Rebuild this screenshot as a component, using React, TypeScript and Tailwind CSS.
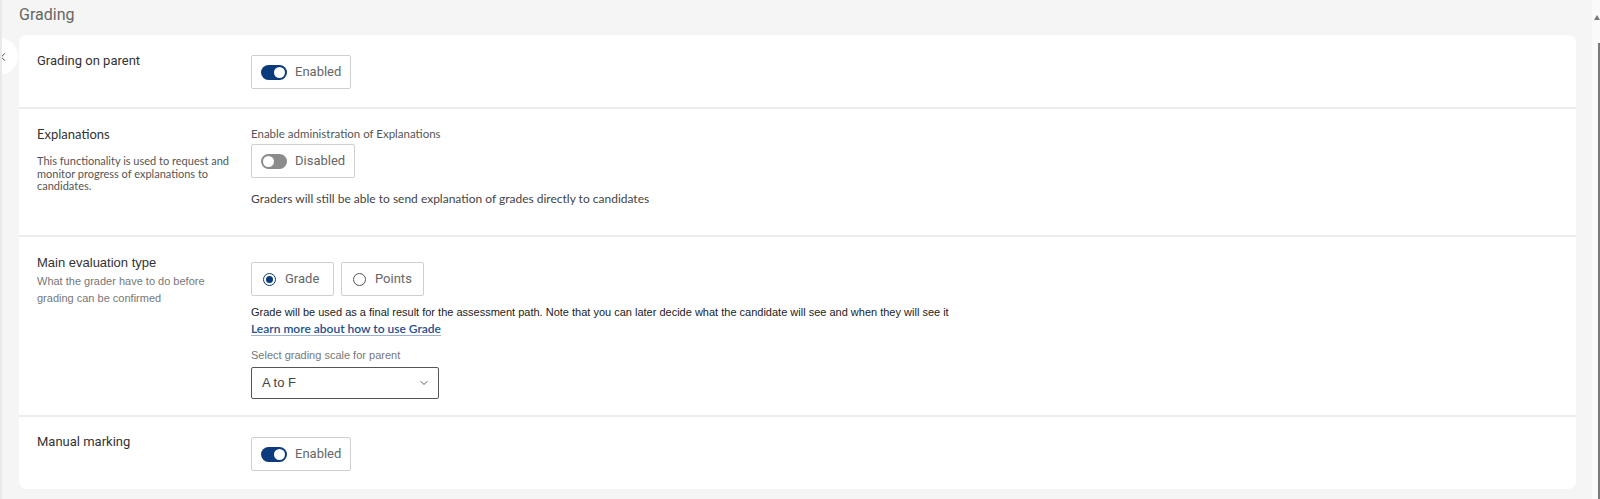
import { ChevronDown, ChevronLeft } from "lucide-react";

const roboto = "font-['Roboto',sans-serif]";
const lato = "font-['Lato',sans-serif]";
const arial = "font-['Liberation_Sans',Arial,sans-serif]";

function Toggle({ on }: { on: boolean }) {
  return (
    <div className="inline-flex h-[34px] items-center gap-[8px] rounded-[2px] border border-[#cfcfcf] bg-white pl-[9px] pr-[9px]">
      <span
        className={`flex h-[15px] w-[26px] items-center rounded-full px-[2px] ${
          on ? "justify-end bg-[#0b3b7d]" : "justify-start bg-[#8c8c8c]"
        }`}
      >
        <span className="h-[11px] w-[11px] rounded-full bg-white" />
      </span>
      <span className={`${roboto} text-[13px] text-[#666]`}>
        {on ? "Enabled" : "Disabled"}
      </span>
    </div>
  );
}

function Radio({ label, checked }: { label: string; checked: boolean }) {
  return (
    <div className="flex h-[34px] w-[83px] items-center gap-[9px] rounded-[2px] border border-[#cfcfcf] bg-white pl-[11px]">
      <span
        className={`flex h-[13px] w-[13px] items-center justify-center rounded-full border-[1.5px] ${
          checked ? "border-[#0b3b7d]" : "border-[#555]"
        }`}
      >
        {checked && <span className="h-[7px] w-[7px] rounded-full bg-[#0b3b7d]" />}
      </span>
      <span className={`${roboto} text-[13px] text-[#666]`}>{label}</span>
    </div>
  );
}

export default function App() {
  return (
    <div className="relative flex h-[499px] w-full overflow-hidden border-l-2 border-[#e9e9e9] bg-[#f5f5f5]">
      {/* collapsed side panel handle */}
      <div className="absolute left-[-21px] top-[38px] flex h-[37px] w-[37px] items-center justify-center rounded-full bg-white">
        <ChevronLeft size={14} strokeWidth={1.5} className="ml-[7px] text-[#333]" />
      </div>

      <div className="flex-1 pl-[17px] pr-[16px]">
        <h2 className={`${roboto} h-[35px] pt-[5px] text-[16px] leading-5 text-[#666]`}>Grading</h2>

        <div className="rounded-[8px] bg-white">
          {/* Grading on parent */}
          <div className="flex border-b-2 border-[#ececec] pb-[18px] pt-4">
            <div className={`${roboto} w-[232px] shrink-0 pl-[18px] text-[13px] leading-5 text-[#333]`}>
              Grading on parent
            </div>
            <div className="mt-1">
              <Toggle on />
            </div>
          </div>

          {/* Explanations */}
          <div className="flex border-b-2 border-[#ececec] pb-[26px] pt-[15px]">
            <div className="w-[232px] shrink-0 pl-[18px]">
              <div className={`${lato} text-[13px] leading-5 text-[#333]`}>Explanations</div>
              <p className={`${lato} mt-[11px] w-[196px] text-[11px] leading-[12.5px] text-[#555]`}>
                This functionality is used to request and monitor progress of explanations to candidates.
              </p>
            </div>
            <div className="flex flex-col items-start">
              <div className={`${lato} text-[11.5px] leading-5 text-[#555]`}>
                Enable administration of Explanations
              </div>
              <Toggle on={false} />
              <div className={`${lato} mt-[11px] text-[12px] leading-5 text-[#444]`}>
                Graders will still be able to send explanation of grades directly to candidates
              </div>
            </div>
          </div>

          {/* Main evaluation type */}
          <div className="flex border-b-2 border-[#ececec] pb-[16px] pt-4">
            <div className="w-[232px] shrink-0 pl-[18px]">
              <div className={`${arial} text-[13px] leading-5 text-[#333]`}>Main evaluation type</div>
              <p className={`${arial} w-[190px] text-[11px] leading-[17px] text-[#777]`}>
                What the grader have to do before grading can be confirmed
              </p>
            </div>
            <div className="flex flex-col items-start">
              <div className="mt-[9px] flex gap-[7px]">
                <Radio label="Grade" checked />
                <Radio label="Points" checked={false} />
              </div>
              <div className={`${arial} mt-[8px] text-[11px] leading-4 text-[#222]`}>
                Grade will be used as a final result for the assessment path. Note that you can later decide what the candidate will see and when they will see it
              </div>
              <a
                href="#"
                className={`${lato} text-[12px] font-semibold leading-[18px] text-[#1d4f8f] underline decoration-[#9db3d1] underline-offset-2`}
              >
                Learn more about how to use Grade
              </a>
              <div className={`${arial} mt-[9px] text-[11px] leading-4 text-[#777]`}>
                Select grading scale for parent
              </div>
              <div className="mt-[4px] flex h-[32px] w-[188px] items-center justify-between rounded-[2px] border border-[#555] pl-[10px] pr-[8px]">
                <span className={`${arial} text-[13px] text-[#444]`}>A to F</span>
                <ChevronDown size={12} strokeWidth={1.75} className="text-[#444]" />
              </div>
            </div>
          </div>

          {/* Manual marking */}
          <div className="flex pb-[18px] pt-[15px]">
            <div className={`${roboto} w-[232px] shrink-0 pl-[18px] text-[13px] leading-5 text-[#333]`}>
              Manual marking
            </div>
            <div className="mt-[5px]">
              <Toggle on />
            </div>
          </div>
        </div>
      </div>

      {/* scrollbar strip */}
      <div className="flex w-[8px] flex-col items-end bg-[#fafafa]">
        <div className="mt-[15px] h-0 w-0 border-x-[3px] border-b-[5px] border-x-transparent border-b-[#777]" />
        <div className="mt-[23px] w-[2px] flex-1 bg-[#7a7a7a]" />
      </div>
    </div>
  );
}
